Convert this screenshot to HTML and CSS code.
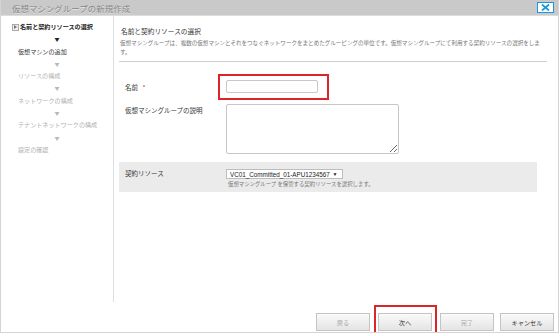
FILE: index.html
```html
<!DOCTYPE html>
<html lang="ja">
<head>
    <meta charset="UTF-8">
    <title>仮想マシングループの新規作成</title>
    <link rel="stylesheet" href="styles.css">
</head>
<body>
    <div class="window">
        <div class="titlebar">
            <span class="title">仮想マシングループの新規作成</span>
            <button class="close" title="閉じる">
                <svg width="9" height="7" viewBox="0 0 9 7">
                    <path d="M1 0.5 L8 6.5 M8 0.5 L1 6.5" stroke="#1a9ad6" stroke-width="1.8"/>
                </svg>
            </button>
        </div>

        <div class="main">
            <aside class="steps">
                <div class="step current"><span class="step-icon"></span>名前と契約リソースの選択</div>
                <div class="arrow dark">▼</div>
                <div class="step next">仮想マシンの追加</div>
                <div class="arrow">▼</div>
                <div class="step">リソースの構成</div>
                <div class="arrow">▼</div>
                <div class="step">ネットワークの構成</div>
                <div class="arrow">▼</div>
                <div class="step">テナントネットワークの構成</div>
                <div class="arrow">▼</div>
                <div class="step">設定の確認</div>
            </aside>

            <section class="content">
                <div class="content-head">
                    <h2>名前と契約リソースの選択</h2>
                    <p class="desc">仮想マシングループは、複数の仮想マシンとそれをつなぐネットワークをまとめたグルーピングの単位です。仮想マシングループにて利用する契約リソースの選択をします。</p>
                </div>

                <div class="form-row row-name">
                    <label class="label">名前 <span class="req">*</span></label>
                    <div class="field">
                        <input type="text" class="text-input">
                        <span class="mark mark-name"></span>
                    </div>
                </div>

                <div class="form-row row-desc">
                    <label class="label">仮想マシングループの説明</label>
                    <div class="field">
                        <textarea class="text-area"></textarea>
                    </div>
                </div>

                <div class="form-row row-resource">
                    <label class="label">契約リソース</label>
                    <div class="field">
                        <div class="select">VC01_Committed_01-APU1234567 <span class="caret">▼</span></div>
                        <p class="hint">仮想マシングループ を保管する契約リソースを選択します。</p>
                    </div>
                </div>
            </section>
        </div>

        <div class="footer">
            <button class="btn" disabled>戻る</button>
            <div class="btn-wrap">
                <button class="btn">次へ</button>
                <span class="mark mark-next"></span>
            </div>
            <button class="btn" disabled>完了</button>
            <button class="btn">キャンセル</button>
        </div>
    </div>
</body>
</html>
```

FILE: styles.css
```css
body {
    margin: 0;
    font-family: "Noto Sans CJK JP", "Liberation Sans", sans-serif;
    background: #fff;
    color: #333;
}
.window {
    width: 559px;
    height: 333px;
    box-sizing: border-box;
    border: 1px solid #d4d4d4;
    border-top: none;
    display: flex;
    flex-direction: column;
    overflow: hidden;
}
.titlebar {
    height: 15px;
    flex: none;
    background: #c9c9c9;
    border-bottom: 1px solid #dcdcdc;
    display: flex;
    align-items: center;
    justify-content: space-between;
    padding: 0 4px 0 11px;
}
.title {
    font-size: 8.4px;
    color: #858585;
    text-shadow: 0 1px 0 #e6e6e6;
    letter-spacing: 0.1px;
}
.close {
    width: 17px;
    height: 11px;
    padding: 0;
    border: 1.5px solid #1a9ad6;
    background: #fff;
    display: flex;
    align-items: center;
    justify-content: center;
}
.main {
    flex: 1;
    display: flex;
    min-height: 0;
}
.steps {
    width: 112px;
    flex: none;
    border-right: 1px solid #dedede;
    padding-top: 5px;
    font-size: 6.1px;
    color: #b0b0b0;
}
.step {
    height: 12.3px;
    line-height: 12.3px;
    padding-left: 17px;
    white-space: nowrap;
}
.step.current {
    color: #222;
    font-weight: bold;
    padding-left: 11px;
    display: flex;
    align-items: center;
}
.step-icon {
    width: 5px;
    height: 5px;
    border: 1px solid #aaa;
    background: #eee;
    margin-right: 1px;
    position: relative;
}
.step-icon::after {
    content: "";
    position: absolute;
    left: 1px;
    top: 0.5px;
    border-left: 3px solid #777;
    border-top: 2px solid transparent;
    border-bottom: 2px solid transparent;
}
.step.next {
    color: #333;
}
.arrow {
    height: 12.3px;
    line-height: 12.3px;
    text-align: center;
    font-size: 5px;
    color: #b8b8b8;
}
.arrow.dark {
    color: #222;
}
.content {
    flex: 1;
    padding: 0 11px 0 5px;
}
.content-head {
    border-bottom: 1px solid #cfcfcf;
    padding: 10px 0 4px 1px;
}
h2 {
    margin: 0 0 3px 1px;
    font-size: 6.7px;
    font-weight: normal;
    color: #333;
    line-height: 10px;
}
.desc {
    margin: 0;
    font-size: 5.55px;
    line-height: 9px;
    color: #777;
}
.form-row {
    display: flex;
    padding-left: 6px;
}
.label {
    width: 101px;
    flex: none;
    font-size: 6.5px;
    color: #333;
}
.req {
    color: #e0303a;
    margin-left: 3px;
}
.field {
    position: relative;
}
.row-name {
    margin-top: 18px;
    align-items: center;
}
.text-input {
    width: 92px;
    height: 13px;
    box-sizing: border-box;
    border: 1px solid #c8c8c8;
    border-radius: 2px;
    display: block;
    margin: 0;
}
.row-desc {
    margin-top: 11px;
}
.row-desc .label {
    line-height: 10px;
    padding-top: 1px;
}
.text-area {
    width: 173px;
    height: 50px;
    box-sizing: border-box;
    border: 1px solid #c8c8c8;
    border-radius: 2px;
    display: block;
    margin: 0;
    resize: both;
}
.row-resource {
    margin: 8px 10px 0 0;
    background: #ebebeb;
    padding-top: 7px;
    height: 30px;
    box-sizing: border-box;
}
.row-resource .label {
    line-height: 8px;
    padding-top: 0;
}
.select {
    width: 117px;
    height: 10px;
    box-sizing: border-box;
    border: 1px solid #bdbdbd;
    background: #fff;
    font-family: "Liberation Sans", sans-serif;
    font-size: 6.3px;
    line-height: 8px;
    padding-left: 3px;
    color: #222;
    white-space: nowrap;
}
.caret {
    font-size: 5px;
    vertical-align: 0.5px;
    margin-left: 1px;
}
.hint {
    margin: 1px 0 0 2px;
    font-size: 5.4px;
    line-height: 9px;
    color: #777;
}
.mark {
    position: absolute;
    border: 2px solid #d9262b;
    box-sizing: border-box;
}
.mark-name {
    left: -8px;
    top: -6px;
    width: 111px;
    height: 26px;
}
.footer {
    height: 30px;
    flex: none;
    display: flex;
    justify-content: flex-end;
    align-items: flex-start;
    gap: 6px;
    padding: 11px 4px 0 0;
    box-sizing: border-box;
}
.btn {
    width: 54px;
    height: 18px;
    border: 1px solid #c4c4c4;
    background: linear-gradient(#fafafa, #e4e4e4);
    font-family: "Noto Sans CJK JP", sans-serif;
    font-size: 6.2px;
    color: #333;
    padding: 0;
    margin: 0;
}
.btn:disabled {
    color: #aaa;
}
.btn-wrap {
    position: relative;
    margin: 0 2px;
    display: flex;
}
.mark-next {
    left: -4px;
    top: -8px;
    width: 63px;
    height: 32px;
}
```
